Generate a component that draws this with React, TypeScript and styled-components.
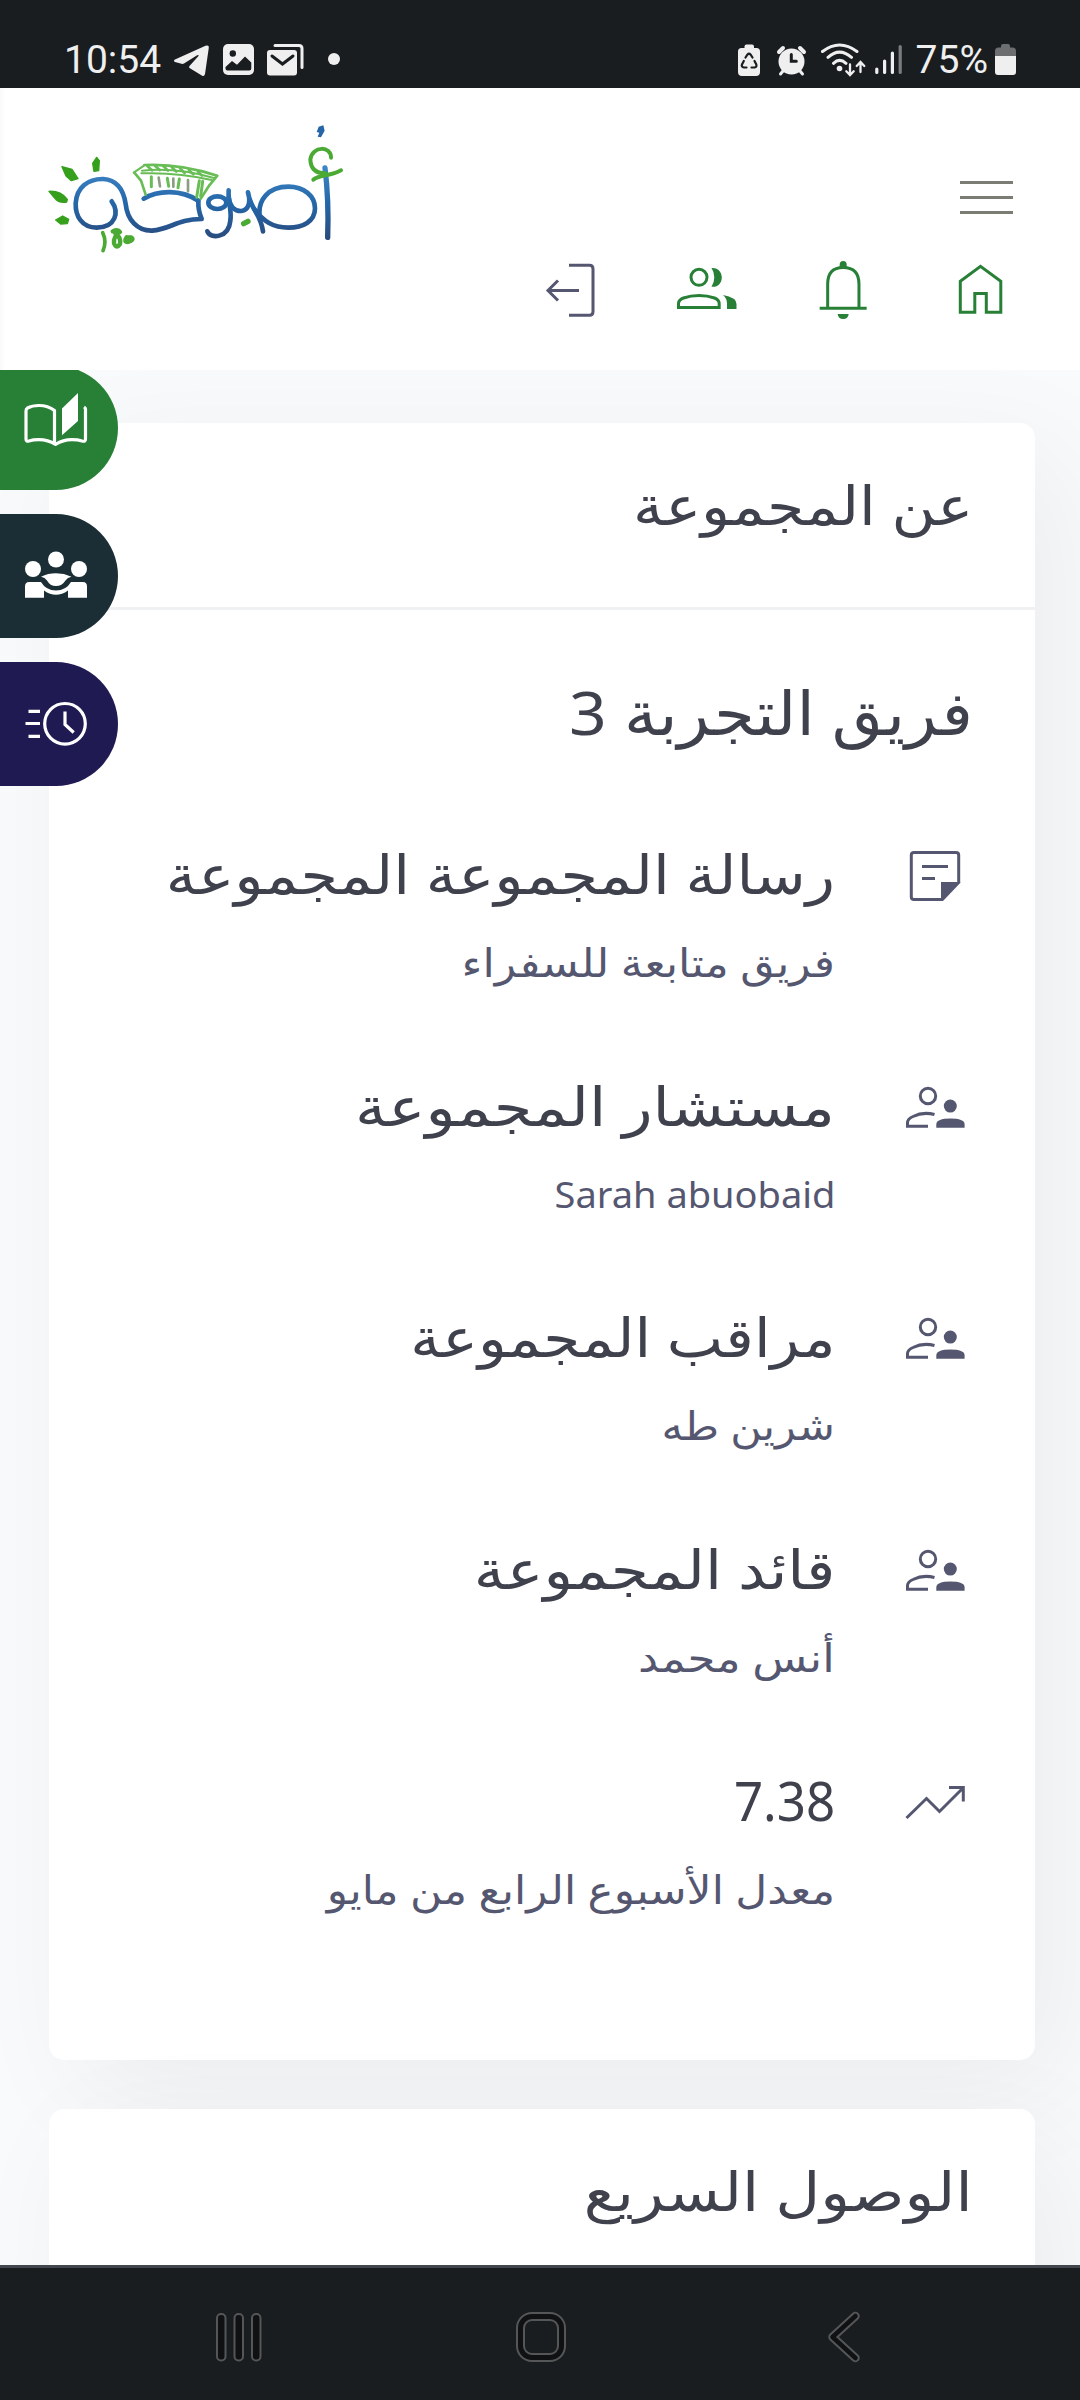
import React from "react";
import styled, { createGlobalStyle } from "styled-components";

const ink = "#3f414d";
const slate = "#555770";
const green = "#288037";
const chrome = "#191d20";
const light = "#efefef";

const GlobalStyle = createGlobalStyle`
  * { box-sizing: border-box; }
  html, body { margin: 0; padding: 0; }
  body {
    background: #f8fafc;
    font-family: "Noto Sans", "DejaVu Sans", sans-serif;
    overflow: hidden;
  }
  svg { display: block; flex: none; }
`;

const Screen = styled.div`
  width: 1080px;
  height: 2400px;
  display: flex;
  flex-direction: column;
  overflow: hidden;
  background: #f8fafc;
`;

/* ---------- system bars ---------- */

const StatusBar = styled.div`
  height: 88px;
  flex: none;
  display: flex;
  align-items: flex-start;
  justify-content: space-between;
  padding: 36px 60px 0 64px;
  background: ${chrome};
  color: ${light};
`;

const StatusGroup = styled.div`
  display: flex;
  align-items: center;
  height: 48px;
`;

const StatusText = styled.span<{ $after: number; $before?: number }>`
  margin: 0 ${(p) => p.$after}px 0 ${(p) => p.$before ?? 0}px;
  font: 400 39px/48px Roboto, sans-serif;
  white-space: nowrap;
`;

const NavBar = styled.div`
  height: 135px;
  flex: none;
  display: flex;
  justify-content: space-between;
  align-items: center;
  padding: 5px 206px 0;
  background: ${chrome};
  border-top: 3px solid #41474c;
`;

/* ---------- site header ---------- */

const Header = styled.header`
  height: 282px;
  flex: none;
  display: flex;
  justify-content: space-between;
  padding: 22px 65px 0 30px;
  background: linear-gradient(to right, #f9f9fa, #fff 5px);
  position: relative;
  z-index: 3;
`;

const HeaderSide = styled.div`
  display: flex;
  flex-direction: column;
  align-items: flex-end;
  gap: 42px;
  padding-top: 71px;
`;

const MenuButton = styled.button`
  width: 53px;
  height: 33px;
  margin: 0 2px 0 0;
  padding: 0;
  border: 0;
  background: none;
  display: flex;
  flex-direction: column;
  justify-content: space-between;
`;

const MenuLine = styled.span`
  display: block;
  width: 53px;
  height: 3px;
  background: #7b7c74;
`;

const HeaderIcons = styled.nav`
  display: flex;
  gap: 68.67px;
`;

/* ---------- content ---------- */

const Main = styled.main`
  flex: 1;
  min-height: 0;
  position: relative;
  display: flex;
  flex-direction: column;
  gap: 49px;
  padding: 53px 45px 0 49px;
  overflow: hidden;
`;

const Card = styled.section<{ $height: number }>`
  height: ${(p) => p.$height}px;
  flex: none;
  border-radius: 15px;
  background: #fff;
  box-shadow: 30px 30px 120px rgba(0, 0, 0, 0.055);
`;

const CardHeader = styled.div`
  height: 187px;
  padding: 41px 62px 0;
  border-bottom: 3px solid #f0f1f2;
  direction: rtl;
`;

const CardBody = styled.div`
  padding: 57px 62px 0;
  direction: rtl;
`;

const Stretch = styled.span<{ $x: number }>`
  display: inline-block;
  white-space: nowrap;
  transform: scaleX(${(p) => p.$x});
  transform-origin: right center;
`;

const CardTitle = styled.h4`
  margin: 0;
  font-size: 54px;
  line-height: 80px;
  font-weight: 400;
  color: ${ink};
`;

const TeamName = styled.h3`
  margin: 0 0 75px;
  font-size: 61px;
  line-height: 90px;
  font-weight: 400;
  color: ${ink};
`;

const InfoList = styled.ul`
  list-style: none;
  margin: 0;
  padding: 0 3px 0 0;
`;

const InfoRow = styled.li`
  display: flex;
  gap: 67px;
  height: 231.7px;
`;

const InfoText = styled.div`
  display: flex;
  flex-direction: column;
  align-items: flex-start;
  gap: 19px;
  padding-top: 1px;
`;

const InfoTitle = styled.div<{ $latin?: boolean }>`
  font-size: ${(p) => (p.$latin ? 54 : 54)}px;
  line-height: 80px;
  color: ${ink};
`;

const InfoSub = styled.div<{ $latin?: boolean }>`
  font-size: ${(p) => (p.$latin ? 37 : 39)}px;
  line-height: 60px;
  color: ${slate};
`;

/* ---------- floating side buttons ---------- */

const SideDock = styled.aside`
  position: absolute;
  left: 0;
  top: -4px;
  display: flex;
  flex-direction: column;
  gap: 24px;
`;

const SideButton = styled.button<{ $bg: string }>`
  width: 118px;
  height: 124px;
  padding: 0 0 0 20px;
  border: 0;
  border-radius: 0 62px 62px 0;
  background: ${(p) => p.$bg};
  display: flex;
  align-items: center;
`;

/* ---------- icons ---------- */

type IconProps = { box: string; color?: string; children: React.ReactNode; w?: number };

function Icon({ box, color = green, w = 3, children }: IconProps) {
  const [, , width, height] = box.split(" ");
  return (
    <svg
      width={width}
      height={height}
      viewBox={box}
      fill="none"
      stroke={color}
      strokeWidth={w}
      aria-hidden="true"
    >
      {children}
    </svg>
  );
}

const Logo = () => (
  <svg width="330" height="160" viewBox="0 0 990 480" fill="none" strokeLinecap="round" strokeLinejoin="round">
    <defs>
      <linearGradient id="blue" x1="0" y1="170" x2="0" y2="390" gradientUnits="userSpaceOnUse">
        <stop offset="0" stopColor="#3f86c6" />
        <stop offset="0.5" stopColor="#2467a9" />
        <stop offset="1" stopColor="#2a4a7c" />
      </linearGradient>
    </defs>
    <g stroke="url(#blue)" strokeWidth="14">
      <path d="M245 274C268 306 258 352 200 353C155 352 136 318 137 280C140 232 174 206 220 207C264 210 281 242 287 282C292 330 322 363 366 362C424 357 440 328 515 327Q504 300 505 274" />
      <path d="M341 266C385 240 452 238 505 272" />
      <ellipse cx="562" cy="278" rx="27" ry="19" />
      <path d="M596 241C594 280 606 300 601 332C596 385 540 388 532 364" />
      <path d="M596 262C600 290 615 304 634 303C656 300 663 276 654 247C662 300 692 310 699 364" />
      <path d="M690 325C680 270 716 230 775 230C822 230 855 258 855 295C855 335 818 353 775 353C730 353 700 335 672 296" />
      <path d="M885 174Q897 270 893 382" strokeWidth="16" />
    </g>
    <path d="M866 50L880 46 884 62 873 82 863 80 868 68 860 66Z" fill="#2565a8" />
    <g stroke="#4aaa33" strokeWidth="12">
      <path d="M903 143C904 108 848 106 841 148C842 180 862 190 886 190M850 209C872 192 900 200 933 181" />
      <g stroke="#69bd56">
        <path d="M313 188l20 24 14 42M343 165Q450 160 562 197L538 226 512 266" strokeWidth="8" />
        <path d="M311 188L343 166M336 182Q440 172 552 204M334 190Q440 186 545 210" strokeWidth="6" />
        <path d="M352 168l14 13M375 167l14 13M400 168l14 14M425 171l14 14M450 175l14 14M476 179l14 14M504 185l12 12" strokeWidth="8" />
        <path d="M364 200v30M412 205l4 24M448 207l-4 26M508 212l-8 50M518 214l-6 45" strokeWidth="9" />
        <path d="M386 203l4 26M430 206v24M474 210v34" stroke="#8d9c84" strokeWidth="8" />
      </g>
      <path d="M218 368Q231 395 219 422" strokeWidth="11" />
      <path d="M248 364q16-8 22 2-20 12-18 34 8 18 18 2 4-20-14-32M290 382q-10 14 4 14 20-6 10-14l-14 0" strokeWidth="13" />
      <path d="M641 341l13-7" strokeWidth="16" />
    </g>
    <g fill="#36a01c" stroke="#36a01c" strokeWidth="4">
      <path d="M200 142L208 152 206 182 192 184 188 160Z" />
      <path d="M96 170L126 178 144 206 124 212 108 198Z" />
      <path d="M57 244Q92 242 112 268L110 276Q86 280 74 264Z" />
      <path d="M77 330L98 318 116 328 112 341 92 342Z" />
    </g>
  </svg>
);

const Telegram = () => (
  <Icon box="169 42 47 38">
    <path stroke="none" fill={light} d="M176 63q-2-1.5 0-2.6L206.500 46.800q3.800-1 3.300 2L206 75q-.8 3-3.200 1.500L190.500 69q-1-1 0-2L199.300 57.300q1-2.200-1.200-1L185 64.500q-1 .6-2.500.3z" />
  </Icon>
);

const Picture = () => (
  <Icon box="216 42 44 38">
    <rect x="224" y="45" width="31" height="31" rx="5" fill={light} stroke="none" />
    <circle cx="233.800" cy="54.500" r="3.200" fill={chrome} stroke="none" />
    <path stroke="none" fill={chrome} d="M226.500 68L233 62 238 65.700 246 57.500 252.300 63.500V69.500q0 2-2 2H228.500q-2 0-2-2z" />
  </Icon>
);

const Mail = () => (
  <Icon box="260 42 60 38">
    <rect x="268" y="51" width="30" height="25.500" rx="3" fill={light} stroke="none" />
    <path d="M273 57L283.500 65 294 57" stroke={chrome} strokeLinecap="round" />
    <path d="M276 46.500H300q3 0 3 3V68.500" stroke={light} strokeLinecap="round" />
  </Icon>
);

const Dot = () => (
  <Icon box="320 42 25 38">
    <circle cx="335" cy="60" r="6" fill={light} stroke="none" />
  </Icon>
);

const SaverBattery = () => (
  <Icon box="735 41 38 38">
    <path stroke="none" fill={light} d="M744.500 48V46.500q0-2 2-2H752q2 0 2 2V48h2.500q3.500 0 3.500 3.500V72q0 4-4 4H742q-4 0-4-4V51.500q0-3.500 3.500-3.500z" />
    <path stroke={chrome} strokeWidth="2.200" strokeLinecap="round" d="M745.500 57.500L747.500 54.500q1.500-1.500 3 0L752.500 57.500M754.500 61L756.300 64.500q.8 2.500-1.700 3H751.500M746.500 67.500H744q-3-.5-2-3L743.800 61" />
  </Icon>
);

const Alarm = () => (
  <Icon box="773 41 43 38">
    <circle cx="791.500" cy="61.500" r="13" fill={light} stroke="none" />
    <path d="M779 52l4-4M804 52l-4-4" stroke={light} strokeWidth="4" strokeLinecap="round" />
    <path d="M783 71l-2.500 3M800 71l2.500 3" stroke={light} strokeWidth="3" strokeLinecap="round" />
    <path d="M791.300 54.500v6.700h5" stroke={chrome} strokeLinecap="round" />
  </Icon>
);

const Wifi = () => (
  <Icon box="816 41 54 38">
    <g stroke={light} strokeLinecap="round">
      <path d="M822.500 51.500Q839.500 38.500 857 51.500M828 57.300Q839.500 47 851.500 57.300M833.500 63.300Q839.500 57.500 846 63.300" />
      <path strokeWidth="2.300" d="M850 64.500V74.500M846.300 71.300L850 75 853.700 71.300M860.500 72V62.500M856.700 66L860.500 62 864.300 66" />
    </g>
    <circle cx="839.500" cy="68.500" r="2.800" fill={light} stroke="none" />
  </Icon>
);

const Signal = () => (
  <Icon box="870 41 44 38" w={3.2}>
    <g stroke={light} strokeLinecap="round">
      <path d="M876.800 69V72.500M884.600 61V72.500M892.400 53V72.500" />
      <path d="M900.200 46.500V72.500" stroke="#7a7c7e" />
    </g>
  </Icon>
);

const Battery = () => (
  <Icon box="991 41 29 38">
    <path stroke="none" fill="#6c6e70" d="M1001 47.500V46q0-2 2-2h5q2 0 2 2v1.500h2.500q3.500 0 3.500 3.500v5H995v-5q0-3.500 3.500-3.500z" />
    <path stroke="none" fill={light} d="M995 56h21v16q0 3-3 3h-15q-3 0-3-3z" />
  </Icon>
);

const LogoutIcon = () => (
  <Icon box="537 256 68 66" color={slate}>
    <path d="M569 265.300H589.500Q593 265.300 593 269V311.500Q593 315.300 589.500 315.300H569M548 290.500H579M558 280.500L548 290.500 558 300.500" />
  </Icon>
);

const GroupIcon = () => (
  <Icon box="674.500 256 68 66">
    <circle cx="699.500" cy="277.300" r="8" />
    <path d="M679 307.500V303.500Q679 300 684 298Q691 295.500 699.500 295.500Q708 295.500 715 298Q719.700 300 719.700 303.500V307.500Z" />
    <path fill={green} stroke="none" d="M712 268C719 267.500 722.300 272.500 722.300 277.400C722.300 282.500 719 287.300 712 286.800Q714.800 282.500 714.800 277.400Q714.800 272 712 268ZM723.500 295Q737 297.500 737 304V309H727.500V303.500Q727.500 298.500 723.500 295Z" />
  </Icon>
);

const BellIcon = () => (
  <Icon box="810.330 256 68 66">
    <path d="M820 308.300H867M828 307V284Q828 267.500 843.500 267.500Q859.300 267.500 859.300 284V307" />
    <path fill={green} stroke="none" d="M840 268V264.500Q840 261 843.500 261Q847 261 847 264.500V268ZM838 314H849Q848.500 319 843.500 319Q838.500 319 838 314Z" />
  </Icon>
);

const HomeIcon = () => (
  <Icon box="947 256 68 66">
    <path d="M960.300 312.300V281.200L980.500 266.300 1000.800 281.200V312.300H986.300V293.500H974.800V312.300Z" />
  </Icon>
);

const BookIcon = () => (
  <Icon box="20 384 70 88" color="#fff" w={3.2}>
    <path strokeLinejoin="round" d="M54.500 444.500V410.500Q48 405.500 39 405.500Q32 405.500 27.500 408Q26 409 26 411V439Q26 442 29 441Q33 439.700 39 439.700Q48 439.700 55.500 444.500Q63 439.700 72 439.700Q78 439.700 82 441Q85.500 442 85.500 439V409Q85.500 408 84 407" />
    <path fill="#fff" stroke="none" d="M62 408.500L78 393V421L62 435.200Z" />
  </Icon>
);

const PeopleIcon = () => (
  <Icon box="20 547 70 60">
    <g fill="#fff" stroke="none">
      <circle cx="56" cy="560.500" r="8" />
      <circle cx="33" cy="570" r="8" />
      <circle cx="79" cy="570" r="8" />
      <path d="M41 577.700Q48 574.300 56 574.300Q64 574.300 71.500 577.700Q67.500 578.500 65.500 581.500Q62 587 56 587Q50 587 47 581.500Q45 578.500 41 577.700Z" />
      <path d="M25 598.700V587.500Q25 583 29 583H41Q46 591.500 56 591.500Q66 591.500 71 583H83Q87 583 87 587.500V598.700H68V591.500Q62 595.800 56 595.800Q50 595.800 44 591.500V598.700Z" />
    </g>
  </Icon>
);

const ClockIcon = () => (
  <Icon box="20 695 70 60" color="#fff" w={3.2}>
    <circle cx="65" cy="724.800" r="20.300" />
    <path d="M65 712.500V725.500L73.700 733.500M28.500 712.300H40M25.500 724.500H40M28.500 737.300H40" />
  </Icon>
);

const NoteIcon = () => (
  <Icon box="902 832 68 80" color={slate}>
    <path d="M942.500 899.500H914Q911.300 899.500 911.300 897V855Q911.300 852.500 914 852.500H956Q958.700 852.500 958.700 855V883M922 866.500H948M922 878.500H935" />
    <path fill={slate} stroke="none" d="M941 882H960.200V883L943 901H941Z" />
  </Icon>
);

const SupervisorIcon = () => (
  <Icon box="902 1064.500 68 80" color={slate}>
    <circle cx="928" cy="1096.500" r="7.700" />
    <path d="M934.500 1115Q923 1112 913 1117Q907.500 1119.500 907.500 1123V1126.700H928" />
    <circle cx="950.300" cy="1106.600" r="6.500" fill={slate} stroke="none" />
    <path fill={slate} stroke="none" d="M936.300 1128.300V1124.500Q936.800 1119 950.300 1119Q964.300 1119 964.600 1124.500V1128.300Z" />
  </Icon>
);

const TrendIcon = () => (
  <Icon box="902 1759 68 80" color={slate}>
    <path d="M906.500 1818L926.500 1798.500 939.500 1811.500 963 1788M949 1787.500H963.300V1801.500" />
  </Icon>
);

const RecentsIcon = () => (
  <Icon box="206 2306 66 62" color="#555657" w={2}>
    {[217, 234.500, 252].map((x) => (
      <rect key={x} x={x} y="2314" width="8.500" height="46.500" rx="4" fill="#101112" />
    ))}
  </Icon>
);

const HomeButtonIcon = () => (
  <Icon box="506 2306 68 62" color="#555657" w={2}>
    <rect x="517" y="2313" width="48" height="48" rx="15" fill="#101112" />
    <rect x="524" y="2320" width="34" height="34" rx="8" fill={chrome} />
  </Icon>
);

const BackIcon = () => (
  <Icon box="808 2306 66 62">
    <g strokeLinecap="round" strokeLinejoin="round">
      <path d="M855.500 2316L832.500 2337 855.500 2358" stroke="#555657" strokeWidth="8.500" />
      <path d="M855.500 2316L832.500 2337 855.500 2358" stroke="#101112" strokeWidth="4.500" />
    </g>
  </Icon>
);

type Info = { icon: React.ReactNode; title: string; tx: number; sub: string; sx: number; latin?: "title" | "sub" };

const rows: Info[] = [
  { icon: <NoteIcon />, title: "رسالة المجموعة المجموعة", tx: 1.121, sub: "فريق متابعة للسفراء", sx: 1.135 },
  { icon: <SupervisorIcon />, title: "مستشار المجموعة", tx: 1.154, sub: "Sarah abuobaid", sx: 1.027, latin: "sub" },
  { icon: <SupervisorIcon />, title: "مراقب المجموعة", tx: 1.106, sub: "شرين طه", sx: 1.105 },
  { icon: <SupervisorIcon />, title: "قائد المجموعة", tx: 1.139, sub: "أنس محمد", sx: 1.153 },
  { icon: <TrendIcon />, title: "7.38", tx: 0.945, sub: "معدل الأسبوع الرابع من مايو", sx: 1.127, latin: "title" },
];

export default function App() {
  return (
    <Screen>
      <GlobalStyle />
      <StatusBar>
        <StatusGroup>
          <StatusText $after={7}>10:54</StatusText>
          <Telegram />
          <Picture />
          <Mail />
          <Dot />
        </StatusGroup>
        <StatusGroup>
          <SaverBattery />
          <Alarm />
          <Wifi />
          <Signal />
          <StatusText $after={3} $before={2}>75%</StatusText>
          <Battery />
        </StatusGroup>
      </StatusBar>

      <Header>
        <Logo />
        <HeaderSide>
          <MenuButton aria-label="menu">
            <MenuLine />
            <MenuLine />
            <MenuLine />
          </MenuButton>
          <HeaderIcons>
            <LogoutIcon />
            <GroupIcon />
            <BellIcon />
            <HomeIcon />
          </HeaderIcons>
        </HeaderSide>
      </Header>

      <Main>
        <Card $height={1637}>
          <CardHeader>
            <CardTitle>
              <Stretch $x={1.115}>عن المجموعة</Stretch>
            </CardTitle>
          </CardHeader>
          <CardBody>
            <TeamName>
              <Stretch $x={1.08}>فريق التجربة 3</Stretch>
            </TeamName>
            <InfoList>
              {rows.map((r) => (
                <InfoRow key={r.title}>
                  {r.icon}
                  <InfoText>
                    <InfoTitle $latin={r.latin === "title"}>
                      <Stretch $x={r.tx}>{r.title}</Stretch>
                    </InfoTitle>
                    <InfoSub $latin={r.latin === "sub"}>
                      <Stretch $x={r.sx}>{r.sub}</Stretch>
                    </InfoSub>
                  </InfoText>
                </InfoRow>
              ))}
            </InfoList>
          </CardBody>
        </Card>

        <Card $height={400}>
          <CardHeader>
            <CardTitle>
              <Stretch $x={1.145}>الوصول السريع</Stretch>
            </CardTitle>
          </CardHeader>
        </Card>

        <SideDock>
          <SideButton $bg="#288037">
            <BookIcon />
          </SideButton>
          <SideButton $bg="#1b2e35">
            <PeopleIcon />
          </SideButton>
          <SideButton $bg="#1f1a52">
            <ClockIcon />
          </SideButton>
        </SideDock>
      </Main>

      <NavBar>
        <RecentsIcon />
        <HomeButtonIcon />
        <BackIcon />
      </NavBar>
    </Screen>
  );
}
